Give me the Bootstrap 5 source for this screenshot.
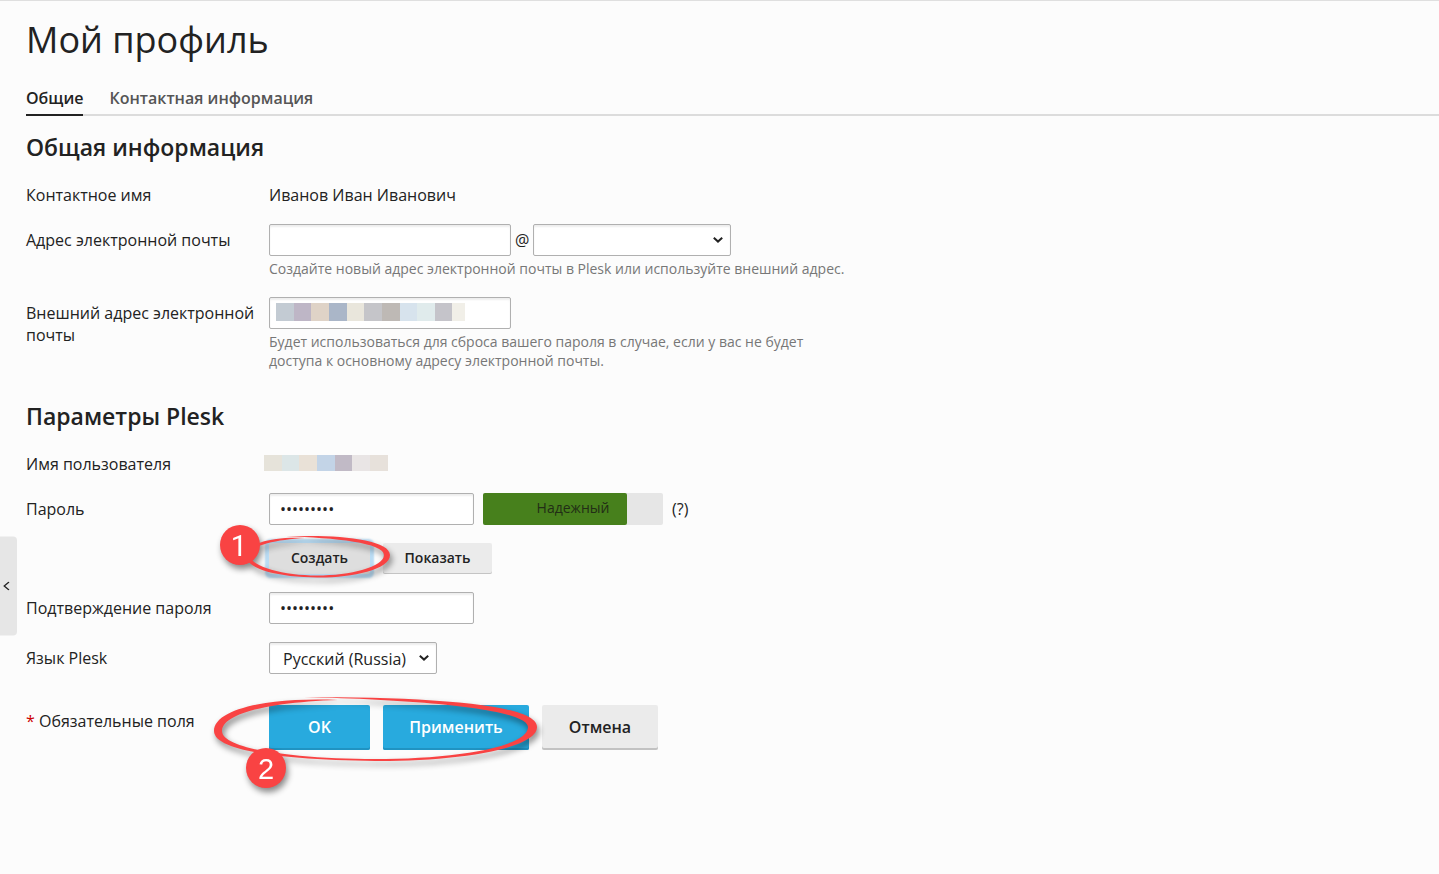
<!DOCTYPE html>
<html lang="ru">
<head>
<meta charset="utf-8">
<meta name="viewport" content="width=device-width, initial-scale=1">
<title>Мой профиль</title>
<link href="https://cdn.jsdelivr.net/npm/bootstrap@5.3.0/dist/css/bootstrap.min.css" rel="stylesheet">
<style>
  body { font: 400 16px/22px "Open Sans", sans-serif; color: #222; background: #fcfcfc; border-top: 1px solid #dfdfdf; }
  .page { padding: 17px 0 80px 26px; }
  .page-title { font-size: 36px; line-height: 44px; font-weight: 400; margin: 0 0 25px; }
  .tabs { border-bottom: 2px solid #dcdcdc; gap: 26px; }
  .tabs .nav-link { padding: 0 0 5px; margin-bottom: -2px; color: #555; font-weight: 600; border-bottom: 2px solid transparent; }
  .tabs .nav-link.active { color: #222; border-color: #222; }
  .section-title { font-size: 23px; line-height: 32px; font-weight: 600; margin: 0 0 21px; }
  .general { margin-top: 15px; }
  .settings { margin-top: 29px; }
  .field { margin-bottom: 18px; }
  .field-label { flex: 0 0 243px; padding-right: 10px; }
  .tall > .field-label { padding-top: 5px; }
  .field-body { min-width: 0; max-width: 590px; }
  .page .form-control, .page .form-select { height: 32px; font-size: 16px; line-height: 22px; color: #222; border: 1px solid #b0b0b0; border-radius: 2px; padding: 4px 10px; background-color: #fff; box-shadow: inset 0 2px 2px #00000012; }
  .page .form-select { padding: 5px 26px 3px 13px; background-image: url("data:image/svg+xml,%3Csvg xmlns='http://www.w3.org/2000/svg' viewBox='0 0 10 6'%3E%3Cpath d='M.8.8 5 4.6 9.2.8' fill='none' stroke='%23222' stroke-width='2'/%3E%3C/svg%3E"); background-size: 10px 6px; background-position: right 7px center; }
  .w-mail { width: 242px; }
  .w-domain { width: 198px; }
  .w-pass { width: 205px; }
  .w-lang { width: 168px; }
  .hint { font-size: 14px; line-height: 19px; color: #777; margin: 3px 0 1px; }
  .blur-mail { left: 7px; top: 6px; width: 189px; height: 18px; background: linear-gradient(90deg, #c3cbd3 0 18px, #beb6c6 0 35px, #dfd3c7 0 53px, #aab6c8 0 71px, #e9e6dc 0 88px, #c5c5c9 0 106px, #beb9b5 0 124px, #d7e3ed 0 141px, #e0ebec 0 159px, #c5c4ca 0 176px, #f1efe8 0); }
  .blur-user { width: 124px; height: 16px; margin: 2px 0 4px -5px; background: linear-gradient(90deg, #e6e3da 0 18px, #dce6e7 0 35px, #e9e1d7 0 53px, #c3d4e7 0 71px, #c1bac6 0 88px, #e9e5e5 0 106px, #e7e1db 0); }
  .meter { width: 180px; height: 32px; background: #e6e6e6; border-radius: 2px; margin: 0 9px; font-size: 14px; line-height: 30px; }
  .meter-fill { width: 80%; background: #47801c; border-radius: 2px; }
  .meter-text { color: #222e16; }
  .page .btn { border: 0; border-radius: 2px; font-weight: 600; color: #222; background: #ebebeb; }
  .page .btn-tool { height: 31px; font-size: 14px; line-height: 29px; padding: 0 21px 2px; box-shadow: inset 0 -1px #c4c4c4; }
  .page .btn-tool.focused { background: #dedede; box-shadow: 0 0 2px 4px #b9dcf4; }
  .page .btn-main { height: 45px; line-height: 22px; padding: 10px 26px 12px; box-shadow: inset 0 -2px #c2c2c2; }
  .page .btn-blue { color: #fff; background: #28aade; box-shadow: inset 0 -2px #2093c2; }
  .w-gen { width: 101px; }
  .w-show { width: 109px; }
  .w-apply { width: 146px; }
  .w-cancel { width: 116px; }
  .actions { margin-top: 31px; }
  .gap-btn { gap: 13px; }
  .req { color: #c00; }
  .callout { pointer-events: none; overflow: visible; filter: drop-shadow(2px 4px 3px #00000077); fill: #f94343; }
  .callout text { font: 29px "Liberation Sans", sans-serif; fill: #fff; text-anchor: middle; }
  .callout-1 text { font-family: Roboto, sans-serif; }
  .callout-1 { left: -54px; top: -23px; }
  .callout-2 { left: -59px; top: -15px; }
  .handle { left: 0; top: 67.1%; width: 17px; height: 99px; transform: translateY(-50%); border: 0; border-radius: 0 4px 4px 0; background: #e6e6e6; padding: 0 0 0 3px; }
</style>
</head>
<body>
<button type="button" class="handle position-fixed d-flex align-items-center" aria-label="Развернуть панель">
  <svg width="7" height="9" viewBox="0 0 7 9" fill="none" stroke="#222" stroke-width="1.3"><path d="M6 .5 1.2 4.5 6 8.5"/></svg>
</button>
<main class="page">
  <h1 class="page-title">Мой профиль</h1>
  <nav class="tabs nav">
    <a class="nav-link active" href="#general" aria-current="page">Общие</a>
    <a class="nav-link" href="#contact">Контактная информация</a>
  </nav>
  <form onsubmit="return false">
    <section class="general" id="general">
      <h2 class="section-title">Общая информация</h2>
      <div class="field d-flex">
        <div class="field-label">Контактное имя</div>
        <div class="field-body">Иванов Иван Иванович</div>
      </div>
      <div class="field tall d-flex">
        <label class="field-label" for="mail">Адрес электронной почты</label>
        <div class="field-body">
          <div class="d-flex align-items-center gap-1">
            <input class="form-control w-mail" id="mail" type="text">
            <span>@</span>
            <select class="form-select w-domain" aria-label="Домен"><option></option></select>
          </div>
          <div class="hint">Создайте новый адрес электронной почты в Plesk или используйте внешний адрес.</div>
        </div>
      </div>
      <div class="field tall d-flex">
        <label class="field-label" for="external">Внешний адрес электронной почты</label>
        <div class="field-body">
          <div class="position-relative">
            <input class="form-control w-mail" id="external" type="text">
            <span class="blur-mail position-absolute"></span>
          </div>
          <div class="hint">Будет использоваться для сброса вашего пароля в случае, если у вас не будет доступа к основному адресу электронной почты.</div>
        </div>
      </div>
    </section>
    <section class="settings">
      <h2 class="section-title">Параметры Plesk</h2>
      <div class="field d-flex">
        <div class="field-label">Имя пользователя</div>
        <div class="blur-user"></div>
      </div>
      <div class="field tall d-flex">
        <label class="field-label" for="pass">Пароль</label>
        <div class="field-body">
          <div class="field d-flex align-items-center">
            <input class="form-control w-pass" id="pass" type="password" value="password1">
            <div class="meter position-relative flex-shrink-0 text-center">
              <div class="meter-fill position-absolute h-100"></div>
              <span class="meter-text position-relative">Надежный</span>
            </div>
            <span>(?)</span>
          </div>
          <div class="d-flex gap-btn position-relative">
            <button type="button" class="btn btn-tool focused w-gen">Создать</button>
            <button type="button" class="btn btn-tool w-show">Показать</button>
            <svg class="callout callout-1 position-absolute" width="180" height="80" viewBox="215 520 180 80" aria-hidden="true">
              <path d="M286 536.5C335 534 390 539 390 555C390 570 350 578 317 577.500C280 577 246 570 246 555C246 543 275 536 305 538C278 539.500 250 545 250 555C250 567 285 575.500 317 575.500C350 575.500 384 567 384 555C384 543 335 537.500 286 536.500Z"/>
              <circle cx="240" cy="545" r="20"/>
              <text x="239" y="556">1</text>
            </svg>
          </div>
        </div>
      </div>
      <div class="field tall d-flex">
        <label class="field-label" for="pass2">Подтверждение пароля</label>
        <input class="form-control w-pass" id="pass2" type="password" value="password1">
      </div>
      <div class="field tall d-flex">
        <label class="field-label" for="lang">Язык Plesk</label>
        <select class="form-select w-lang" id="lang"><option>Русский (Russia)</option></select>
      </div>
    </section>
    <div class="actions tall d-flex">
      <div class="field-label"><span class="req">*</span> Обязательные поля</div>
      <div class="d-flex gap-btn position-relative">
        <button type="submit" class="btn btn-main btn-blue w-gen">OK</button>
        <button type="button" class="btn btn-main btn-blue w-apply">Применить</button>
        <button type="button" class="btn btn-main w-cancel">Отмена</button>
        <svg class="callout callout-2 position-absolute" width="345" height="120" viewBox="210 690 345 120" aria-hidden="true">
          <path d="M304 697C430 697 537 704 537 727C537 750 450 761.500 375 761C290 760 214 752 214 731C214 710 265 697 338 700C272 702 222 713 222 731C222 750 300 759 375 759C450 759 528 748 528 727C528 710 430 700 304 697Z"/>
          <circle cx="266" cy="768" r="20"/>
          <text x="266" y="779">2</text>
        </svg>
      </div>
    </div>
  </form>
</main>
<script src="https://cdn.jsdelivr.net/npm/bootstrap@5.3.0/dist/js/bootstrap.bundle.min.js"></script>
</body>
</html>
